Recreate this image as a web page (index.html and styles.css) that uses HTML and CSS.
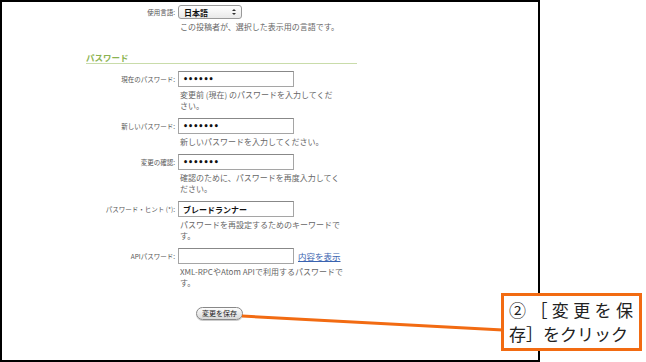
FILE: index.html
```html
<!DOCTYPE html>
<html>
<head>
    <meta charset="utf-8">
    <link rel="stylesheet" href="styles.css">
</head>
<body>
    <div class="frame">
        <div class="row row-lang">
            <label class="lbl" for="lang">使用言語:</label>
            <div class="field">
                <div class="select" id="lang">
                    <span>日本語</span>
                    <svg class="arrows" width="6" height="8" viewBox="0 0 6 8">
                        <path d="M1 3 L3 1 L5 3 Z M1 5 L3 7 L5 5 Z" fill="#333"/>
                    </svg>
                </div>
                <p class="hint">この投稿者が、選択した表示用の言語です。</p>
            </div>
        </div>

        <h3 class="section">パスワード</h3>

        <div class="row">
            <label class="lbl" for="cur">現在のパスワード:</label>
            <div class="field">
                <input class="txt pw" type="password" id="cur" value="xxxxxx">
                <p class="hint">変更前 (現在) のパスワードを入力してくだ<br>さい。</p>
            </div>
        </div>

        <div class="row">
            <label class="lbl" for="new">新しいパスワード:</label>
            <div class="field">
                <input class="txt pw" type="password" id="new" value="xxxxxxx">
                <p class="hint">新しいパスワードを入力してください。</p>
            </div>
        </div>

        <div class="row">
            <label class="lbl" for="conf">変更の確認:</label>
            <div class="field">
                <input class="txt pw" type="password" id="conf" value="xxxxxxx">
                <p class="hint">確認のために、パスワードを再度入力してく<br>ださい。</p>
            </div>
        </div>

        <div class="row">
            <label class="lbl" for="hint">パスワード・ヒント (*):</label>
            <div class="field">
                <input class="txt" type="text" id="hint" value="ブレードランナー">
                <p class="hint">パスワードを再設定するためのキーワードで<br>す。</p>
            </div>
        </div>

        <div class="row">
            <label class="lbl" for="api">APIパスワード:</label>
            <div class="field">
                <div class="inline">
                    <input class="txt" type="text" id="api" value="">
                    <a class="reveal" href="#">内容を表示</a>
                </div>
                <p class="hint">XML-RPCやAtom APIで利用するパスワードで<br>す。</p>
            </div>
        </div>

        <div class="actions">
            <button class="save">変更を保存</button>
        </div>
    </div>

    <svg class="leader" width="646" height="362" viewBox="0 0 646 362">
        <line x1="242" y1="316" x2="503" y2="330" stroke="#f26b12" stroke-width="3"/>
    </svg>
    <div class="callout">②［変更を保存］をクリック</div>
</body>
</html>
```

FILE: styles.css
```css
body {
    margin: 0;
    width: 646px;
    height: 362px;
    background-color: #fff;
    font-family: "Noto Sans CJK JP", "DejaVu Sans", sans-serif;
    position: relative;
    overflow: hidden;
}
.frame {
    width: 536px;
    height: 355px;
    border: 2px solid #000;
    padding-top: 3px;
}
.row {
    display: grid;
    grid-template-columns: 173px 200px;
    column-gap: 3px;
    margin-bottom: 7px;
}
.lbl {
    text-align: right;
    font-size: 6.5px;
    color: #555;
    line-height: 16px;
}
.row-lang .lbl {
    line-height: 14px;
}
.field {
    display: flex;
    flex-direction: column;
}
.select {
    height: 12px;
    border: 1px solid #999;
    border-radius: 3px;
    background: linear-gradient(#fff, #e9e9e9);
    display: flex;
    align-items: center;
    justify-content: space-between;
    padding: 0 4px 0 5px;
    box-sizing: content-box;
    width: 53px;
    font-size: 8px;
    font-weight: bold;
    color: #111;
}
.hint {
    margin: 1px 0 0 2px;
    font-size: 8px;
    line-height: 11px;
    color: #666;
}
.section {
    margin: 20px 0 7px 84px;
    width: 271px;
    font-size: 8.5px;
    line-height: 11px;
    color: #8cb352;
    font-weight: bold;
    border-bottom: 1px solid #c9dcaa;
    padding-bottom: 0;
}
.txt {
    width: 116px;
    height: 16px;
    box-sizing: border-box;
    border: 1px solid #a5a5a5;
    border-top-color: #888;
    padding: 0 4px;
    margin: 0;
    font-family: "Noto Sans CJK JP", sans-serif;
    font-size: 8px;
    font-weight: bold;
    color: #111;
    outline: none;
}
.pw {
    font-family: "DejaVu Sans", sans-serif;
    font-size: 8px;
    letter-spacing: 0;
}
.row .hint {
    margin-top: 2px;
}
.inline {
    display: flex;
    align-items: center;
    gap: 4px;
}
.reveal {
    font-size: 8.5px;
    color: #3a63b0;
    text-decoration: underline;
}
.actions {
    display: flex;
    padding: 12px 0 0 194px;
}
.save {
    font-family: "Noto Sans CJK JP", sans-serif;
    font-size: 7px;
    height: 13px;
    padding: 0 5px;
    line-height: 11px;
    border: 1px solid #888;
    border-radius: 7px;
    background: linear-gradient(#fdfdfd, #d8d8d8);
    color: #222;
    box-shadow: 0 1px 0 #ccc;
}
.leader {
    position: absolute;
    left: 0;
    top: 0;
    pointer-events: none;
}
.callout {
    position: absolute;
    left: 501px;
    top: 293px;
    width: 124px;
    height: 48px;
    padding: 2px 6px 2px 5px;
    border: 3px solid #f26b12;
    background-color: #fff;
    font-size: 17px;
    line-height: 24px;
    color: #222;
    text-align: justify;
}
```
